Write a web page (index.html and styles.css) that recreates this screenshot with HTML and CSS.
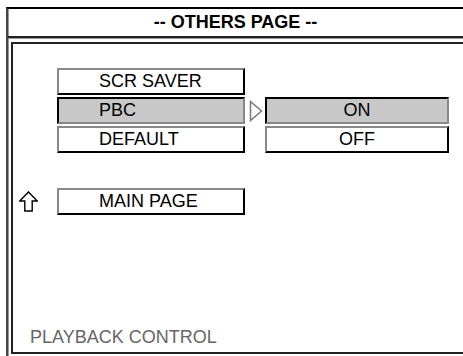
FILE: index.html
```html
<!DOCTYPE html>
<html lang="en">
<head>
  <meta charset="UTF-8">
  <title>Others Page</title>
  <link rel="stylesheet" href="styles.css">
</head>
<body>
  <div class="frame">
    <div class="title">-- OTHERS PAGE --</div>

    <div class="panel">
      <div class="menu">
        <div class="cell"></div>
        <div class="btn left">SCR SAVER</div>
        <div class="cell"></div>
        <div class="cell"></div>

        <div class="cell"></div>
        <div class="btn left pressed">PBC</div>
        <div class="pointer">
          <svg width="14" height="22" viewBox="0 0 14 22">
            <path d="M1.5 1.5 L12.5 11 L1.5 20.5 Z" fill="#fff" stroke="#777" stroke-width="1.5"/>
          </svg>
        </div>
        <div class="btn pressed">ON</div>

        <div class="cell"></div>
        <div class="btn left">DEFAULT</div>
        <div class="cell"></div>
        <div class="btn">OFF</div>

        <div class="spacer"></div>

        <div class="back">
          <svg width="19" height="21" viewBox="0 0 19 21">
            <path d="M9.5 0.9 L18.3 10 L13.2 10 L13.2 20 L5.8 20 L5.8 10 L0.7 10 Z" fill="#fff" stroke="#000" stroke-width="1.4"/>
          </svg>
        </div>
        <div class="btn left">MAIN PAGE</div>
        <div class="cell"></div>
        <div class="cell"></div>
      </div>

      <div class="status">PLAYBACK CONTROL</div>
    </div>
  </div>
</body>
</html>
```

FILE: styles.css
```css
html, body {
  margin: 0;
  background: #fff;
}
body {
  font-family: "Liberation Sans", Arial, sans-serif;
  color: #000;
}
.frame {
  margin: 7px 0 0 6px;
  height: 347px;
  border-top: 2px solid #000;
  border-left: 2px solid #444;
  box-shadow: inset 1px 0 0 #999;
}
.title {
  height: 27px;
  line-height: 26px;
  text-align: center;
  font-weight: bold;
  font-size: 18px;
  border-bottom: 2px solid #222;
  box-shadow: 0 1px 0 #999;
}
.panel {
  margin: 4px 0 0 3px;
  height: 308px;
  border-top: 2px solid #222;
  border-left: 2px solid #222;
  border-bottom: 2px solid #222;
  display: flex;
  flex-direction: column;
}
.menu {
  display: grid;
  grid-template-columns: 44px 188px 20px 184px;
  grid-template-rows: 27px 27px 27px 31px 27px;
  row-gap: 2px;
  margin-top: 24px;
}
.spacer {
  grid-column: 1 / -1;
}
.btn {
  box-sizing: border-box;
  height: 27px;
  border-style: solid;
  border-width: 2px;
  border-color: #888 #000 #000 #888;
  background: #fff;
  font-size: 18px;
  line-height: 23px;
  text-align: center;
}
.left {
  text-align: left;
  padding-left: 40px;
}
.pressed {
  border-color: #000 #888 #888 #000;
  background: #c8c8c8;
}
.pointer {
  display: flex;
  align-items: center;
  padding-left: 4px;
}
.back {
  padding-left: 6px;
  display: flex;
  align-items: center;
}
.status {
  margin-top: auto;
  padding: 0 0 4px 17px;
  font-size: 18px;
  color: #666;
}
```
